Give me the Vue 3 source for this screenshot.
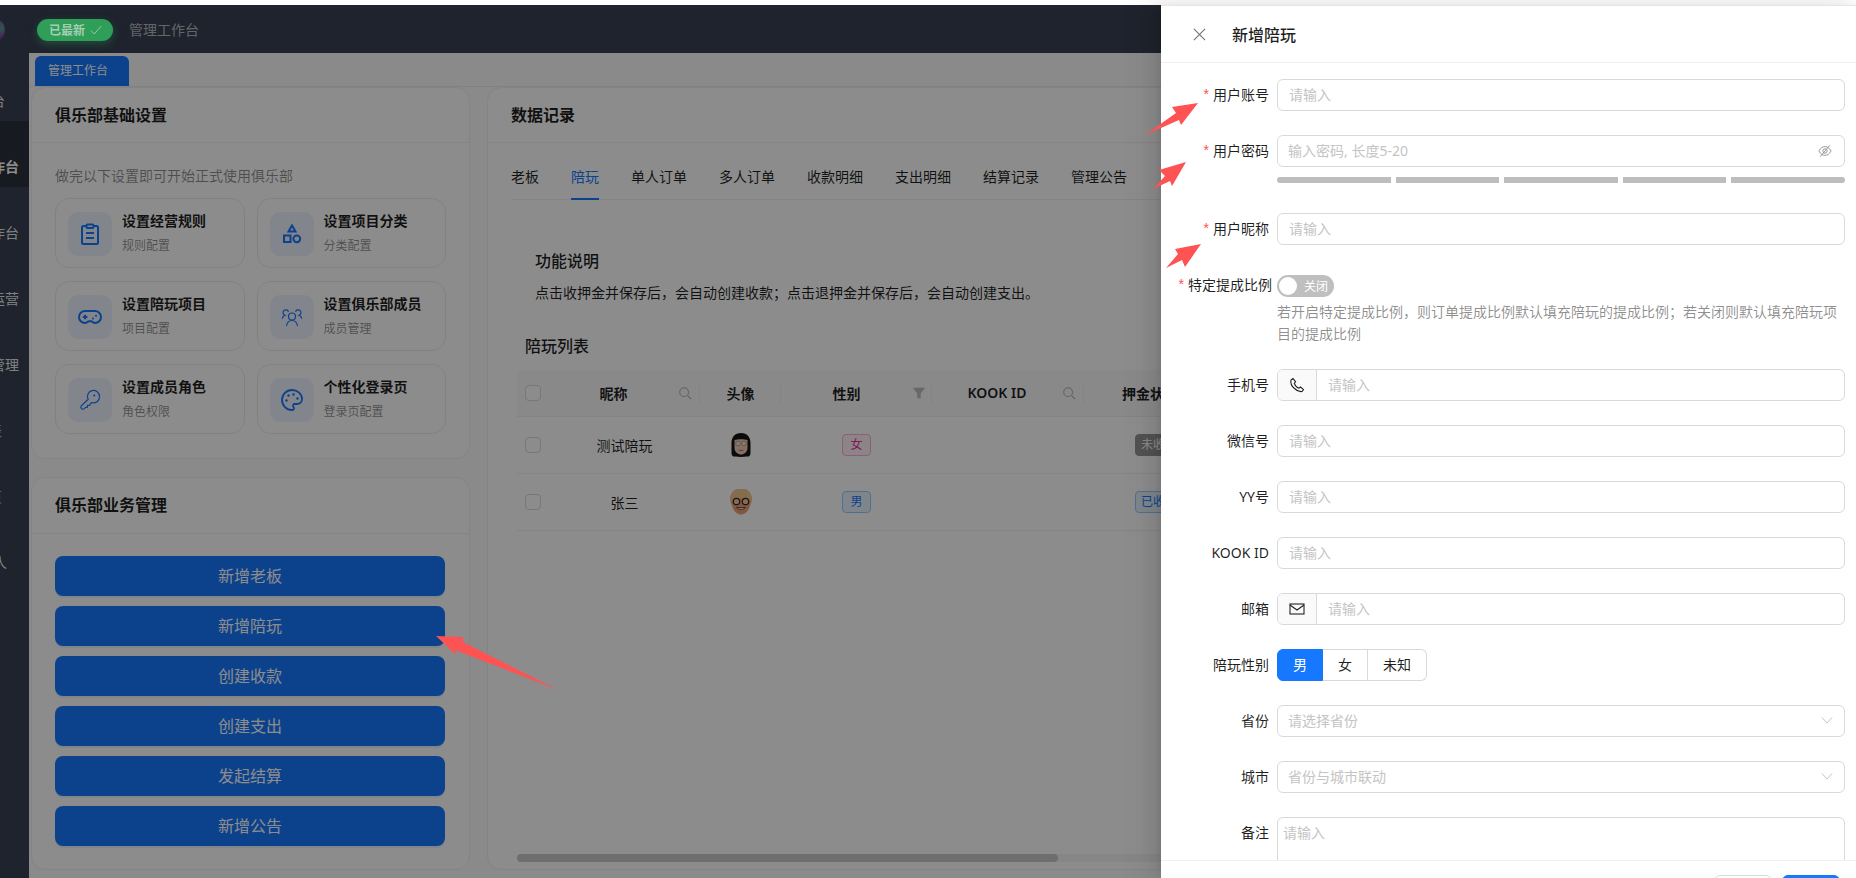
<script setup>
const navItems = [
  { name: '工作台' },
  { name: '管理工作台', active: true },
  { name: '陪玩工作台' },
  { name: '俱乐部运营' },
  { name: '俱乐部管理' },
  { name: '结算表', faint: true },
  { name: '设置页', faint: true },
  { name: '合伙人', tail: true }
]

const setupCards = [
  { title: '设置经营规则', sub: '规则配置', icon: 'rule' },
  { title: '设置项目分类', sub: '分类配置', icon: 'shapes' },
  { title: '设置陪玩项目', sub: '项目配置', icon: 'game' },
  { title: '设置俱乐部成员', sub: '成员管理', icon: 'team' },
  { title: '设置成员角色', sub: '角色权限', icon: 'key' },
  { title: '个性化登录页', sub: '登录页配置', icon: 'palette' }
]

const actions = ['新增老板', '新增陪玩', '创建收款', '创建支出', '发起结算', '新增公告']
const tabs = ['老板', '陪玩', '单人订单', '多人订单', '收款明细', '支出明细', '结算记录', '管理公告']

const players = [
  { name: '测试陪玩', gender: '女', genderClass: 'pink', deposit: '未收款', depositClass: 'gray', avatar: 'girl' },
  { name: '张三', gender: '男', genderClass: 'blue', deposit: '已收款', depositClass: 'blue', avatar: 'boy' }
]

// 表单项，type 决定右侧控件
const fields = [
  { label: '用户账号', required: true, type: 'text', ph: '请输入' },
  { label: '用户密码', required: true, type: 'password', ph: '输入密码, 长度5-20' },
  { label: '用户昵称', required: true, type: 'text', ph: '请输入' },
  { label: '特定提成比例', required: true, type: 'switch' },
  { label: '手机号', type: 'phone', ph: '请输入' },
  { label: '微信号', type: 'text', ph: '请输入' },
  { label: 'YY号', type: 'text', ph: '请输入' },
  { label: 'KOOK ID', type: 'text', ph: '请输入' },
  { label: '邮箱', type: 'mail', ph: '请输入' },
  { label: '陪玩性别', type: 'radio' },
  { label: '省份', type: 'select', ph: '请选择省份' },
  { label: '城市', type: 'select', ph: '省份与城市联动' },
  { label: '备注', type: 'textarea', ph: '请输入' }
]

const arrows = [
  '1198,103 1172,107 1176,113 1145,135 1179,120 1181,125',
  '1186,162 1159,170 1165,176 1153,189 1170,181 1172,186',
  '1201,244 1175,249 1178,254 1166,268 1182,260 1185,267',
  '436,636 463,637 463,642 558,690 455,650 456,655'
]
</script>

<template>
  <div class="page">
    <aside class="sidebar">
      <div class="logo"></div>
      <div v-for="item in navItems" :key="item.name" class="nav-item" :class="{ active: item.active, faint: item.faint, tail: item.tail }">
        <span>{{ item.name }}</span>
      </div>
    </aside>

    <div class="main">
      <header class="topbar">
        <span class="crumb">管理工作台</span>
      </header>

      <div class="tabbar"><div class="page-tab">管理工作台</div></div>

      <div class="content">
        <div class="left-col">
          <section class="card">
            <h3 class="card-head">俱乐部基础设置</h3>
            <div class="setup-body">
              <p class="setup-hint">做完以下设置即可开始正式使用俱乐部</p>
              <div class="setup-grid">
                <div v-for="c in setupCards" :key="c.title" class="setup-card">
                  <div class="setup-icon">
                    <svg viewBox="0 0 24 24" :class="'ic-' + c.icon">
                      <template v-if="c.icon === 'rule'">
                        <rect x="8.500" y="2.500" width="7" height="3.500" rx="1" />
                        <path d="M16 4h2.500a1.500 1.500 0 0 1 1.500 1.500v15a1.500 1.500 0 0 1-1.500 1.500h-13A1.500 1.500 0 0 1 4 20.500v-15A1.500 1.500 0 0 1 5.500 4H8M8 11h8M8 16h8" />
                      </template>
                      <template v-else-if="c.icon === 'shapes'">
                        <path d="M12 3.500l3.500 6h-7z" />
                        <rect x="4" y="13.500" width="6.500" height="6.500" />
                        <circle cx="16.800" cy="16.800" r="3.400" />
                      </template>
                      <template v-else-if="c.icon === 'game'">
                        <path d="M7 6h10a6 6 0 0 1 0 12c-2 0-2.600-1.800-4-1.800h-2C9.600 16.200 9 18 7 18A6 6 0 0 1 7 6z" />
                        <path d="M4.800 12h4.600M7.100 9.700v4.600" />
                        <circle class="dot" cx="15" cy="13.500" r="1" /><circle class="dot" cx="18" cy="10.800" r="1" />
                      </template>
                      <template v-else-if="c.icon === 'team'">
                        <circle cx="12" cy="11.500" r="3.500" />
                        <path d="M6.500 21c.5-3.500 2.800-5.500 5.500-5.500s5 2 5.500 5.500" />
                        <path d="M8.500 6.800A2.800 2.800 0 1 0 5 10.300c-1.600.6-2.600 1.900-2.800 3.500M15.500 6.800a2.800 2.800 0 1 1 3.500 3.500c1.600.6 2.600 1.900 2.800 3.500" />
                      </template>
                      <template v-else-if="c.icon === 'key'">
                        <path d="M21.500 8.500a6 6 0 1 0-11.300 2.800L3.300 17.800a2 2 0 0 0 0 2.600 2.200 2.200 0 0 0 3 .2l1.200-1.100 1.700-.1.300-2 2.300-.3 1.700-2.600a6 6 0 0 0 8-6z" />
                        <circle class="dot" cx="16.300" cy="7.500" r="1" />
                      </template>
                      <template v-else>
                        <path d="M12 22a1 1 0 0 1 0-20 10 9 0 0 1 10 9 5 5 0 0 1-5 5h-2.250a1.750 1.750 0 0 0-1.400 2.800l.3.4a1.750 1.750 0 0 1-1.400 2.800z" />
                        <circle class="dot" cx="13.500" cy="6.500" r="1.200" />
                        <circle class="dot" cx="17.500" cy="10.500" r="1.200" />
                        <circle class="dot" cx="6.500" cy="12.500" r="1.200" />
                        <circle class="dot" cx="8.500" cy="7.500" r="1.200" />
                      </template>
                    </svg>
                  </div>
                  <div>
                    <div class="setup-title">{{ c.title }}</div>
                    <div class="setup-sub">{{ c.sub }}</div>
                  </div>
                </div>
              </div>
            </div>
          </section>

          <section class="card card-biz">
            <h3 class="card-head">俱乐部业务管理</h3>
            <div class="action-list">
              <button v-for="a in actions" :key="a" class="action-btn">{{ a }}</button>
            </div>
          </section>
        </div>

        <section class="card record-card">
          <h3 class="card-head">数据记录</h3>
          <div class="record-tabs">
            <span v-for="t in tabs" :key="t" class="record-tab" :class="{ on: t === '陪玩' }">{{ t }}</span>
          </div>
          <div class="intro">
            <h4>功能说明</h4>
            <p>点击收押金并保存后，会自动创建收款；点击退押金并保存后，会自动创建支出。</p>
          </div>
          <h4 class="list-title">陪玩列表</h4>
          <div class="table">
            <div class="t-row t-head">
              <div class="t-cell"><i class="check"></i></div>
              <div class="t-cell sep has-icon">
                <span>昵称</span>
                <svg viewBox="0 0 16 16" class="th-icon"><circle cx="7" cy="7" r="5" /><path d="M11 11l4 4" /></svg>
              </div>
              <div class="t-cell sep">头像</div>
              <div class="t-cell sep has-icon has-filter">
                <span>性别</span>
                <svg viewBox="0 0 16 16" class="th-icon filter"><path d="M1 2h14L10 8.500V14H6V8.500z" /></svg>
              </div>
              <div class="t-cell sep has-icon">
                <span>KOOK ID</span>
                <svg viewBox="0 0 16 16" class="th-icon"><circle cx="7" cy="7" r="5" /><path d="M11 11l4 4" /></svg>
              </div>
              <div class="t-cell deposit-head">押金状态</div>
            </div>
            <div v-for="p in players" :key="p.name" class="t-row">
              <div class="t-cell"><i class="check"></i></div>
              <div class="t-cell">{{ p.name }}</div>
              <div class="t-cell">
                <svg v-if="p.avatar === 'girl'" viewBox="0 0 20 24" class="avatar-girl">
                  <path d="M10 0C4 0 .5 4 .5 10v10c0 3 2 4 4 3.500 3 .5 8 .5 11 0 2 .5 4-.5 4-3.500V10C19.500 4 16 0 10 0z" fill="#141414" />
                  <path d="M3.500 7C7 6 13 6 16.500 7v8c0 4-3.500 6.500-6.500 6.500S3.500 19 3.500 15z" fill="#eccdb4" />
                  <circle cx="7" cy="10.500" r="2.300" fill="#f6e4d4" stroke="#8a7a6c" stroke-width=".6" />
                  <circle cx="13" cy="10.500" r="2.300" fill="#f6e4d4" stroke="#8a7a6c" stroke-width=".6" />
                  <path d="M7.500 17c1.500.8 3.500.8 5 0" stroke="#a5675a" stroke-width="1" fill="none" />
                </svg>
                <svg v-else viewBox="0 0 24 26" class="avatar-boy">
                  <circle cx="12" cy="10" r="11" fill="#f0c68a" />
                  <path d="M2.500 12c0 8 4.500 13.500 9.500 13.500S21.500 20 21.500 12c-2-3-17-3-19 0z" fill="#ec9f72" />
                  <circle cx="7.500" cy="12.500" r="3.200" fill="#f5c4a0" stroke="#33261f" stroke-width="1.200" />
                  <circle cx="16.500" cy="12.500" r="3.200" fill="#f5c4a0" stroke="#33261f" stroke-width="1.200" />
                  <path d="M7.500 18.500c2.500 2.500 6.500 2.500 9 0z" fill="#fff" stroke="#5a2c20" stroke-width=".8" />
                </svg>
              </div>
              <div class="t-cell"><span class="tag" :class="p.genderClass">{{ p.gender }}</span></div>
              <div class="t-cell"></div>
              <div class="t-cell"><span class="tag narrow" :class="p.depositClass">{{ p.deposit }}</span></div>
            </div>
          </div>
          <div class="h-scroll"><div class="h-thumb"></div></div>
        </section>
      </div>
    </div>

    <div class="mask"></div>

    <span class="badge">已最新
      <svg viewBox="0 0 16 16" class="badge-check"><path d="M2 8.500l4 4 8-9" /></svg>
    </span>

    <div class="drawer">
      <div class="drawer-head">
        <svg viewBox="0 0 14 14" class="close-icon"><path d="M1 1l12 12M13 1L1 13" /></svg>
        <span>新增陪玩</span>
      </div>

      <div class="drawer-body">
        <div v-for="f in fields" :key="f.label" class="form-row" :class="{ 'form-row-pwd': f.type === 'password' }">
          <label class="form-label" :class="{ wide: f.type === 'switch' }">
            <em v-if="f.required">*</em>{{ f.label }}
          </label>

          <div class="form-ctrl">
            <input v-if="f.type === 'text'" class="input" :placeholder="f.ph" />

            <template v-else-if="f.type === 'password'">
              <div class="input-wrap">
                <input class="input bare" :placeholder="f.ph" />
                <svg viewBox="0 0 16 16" class="eye-icon">
                  <path d="M1 8c2-3.500 4.300-5 7-5s5 1.500 7 5c-2 3.500-4.300 5-7 5s-5-1.500-7-5z" />
                  <circle cx="8" cy="8" r="2.500" />
                  <path d="M13.500 1.500l-11 13" />
                </svg>
              </div>
              <div class="strength"><i v-for="n in 5" :key="n"></i></div>
            </template>

            <template v-else-if="f.type === 'switch'">
              <div class="switch"><i></i><span>关闭</span></div>
              <p class="switch-hint">若开启特定提成比例，则订单提成比例默认填充陪玩的提成比例；若关闭则默认填充陪玩项目的提成比例</p>
            </template>

            <div v-else-if="f.type === 'phone' || f.type === 'mail'" class="input-wrap">
              <span class="addon">
                <svg v-if="f.type === 'phone'" viewBox="0 0 16 16"><path d="M4 1.500L2 3c-.8 3.500 1 6.500 3.500 8.500 2 2 4.500 3.500 7.500 3l1.500-2-3-2.500-1.500 1.200C8 10.500 6 8.500 5.300 6.300l1.300-1.500z" /></svg>
                <svg v-else viewBox="0 0 16 16"><rect x="1" y="3" width="14" height="10" /><path d="M1 4l7 5 7-5" /></svg>
              </span>
              <input class="input bare" :placeholder="f.ph" />
            </div>

            <div v-else-if="f.type === 'radio'" class="radio-group">
              <span class="radio on">男</span>
              <span class="radio">女</span>
              <span class="radio">未知</span>
            </div>

            <div v-else-if="f.type === 'select'" class="input-wrap select">
              <span class="select-ph">{{ f.ph }}</span>
              <svg viewBox="0 0 12 12" class="chevron"><path d="M1 3.500l5 5.500 5-5.500" /></svg>
            </div>

            <textarea v-else class="textarea" :placeholder="f.ph"></textarea>
          </div>
        </div>
      </div>

      <div class="drawer-foot">
        <button class="foot-btn">取消</button>
        <button class="foot-btn primary">确定</button>
      </div>
    </div>

    <svg class="marks" viewBox="0 0 1856 878">
      <polygon v-for="(a, i) in arrows" :key="i" :points="a" />
    </svg>
  </div>
</template>

<style scoped>
.page { position: relative; display: flex; height: 873px; padding-top: 5px; overflow: hidden; background: #fff; color: rgba(0,0,0,.88); font-family: "Noto Sans", "Noto Sans CJK SC", sans-serif; font-size: 14px; }

.sidebar { width: 29px; flex-shrink: 0; background: #384052; overflow: hidden; }
.logo { width: 24px; height: 24px; margin: 13px 0 13px -19px; border-radius: 50%; background: radial-gradient(circle at 80% 42%, #5f8f9c 0 10%, #7a3f9c 38%, #3a1f4a 100%); }
.nav-item { position: relative; height: 66px; }
.nav-item span { position: absolute; top: 35px; right: -11px; width: 112px; text-align: center; line-height: 22px; color: rgba(255,255,255,.9); white-space: nowrap; }
.nav-item.active { background: #2c313e; }
.nav-item.active span { color: #fff; font-weight: 600; }
.nav-item.faint span { right: -8px; color: #d8a898; }
.nav-item.tail span { right: -13px; }

.main { flex: 1; min-width: 0; display: flex; flex-direction: column; background: #fbfbfb; }
.topbar { height: 48px; flex-shrink: 0; display: flex; align-items: center; padding-left: 100px; background: #384052; }
.badge { position: absolute; left: 37px; top: 19px; z-index: 11; display: inline-flex; align-items: center; gap: 4px; width: 76px; height: 22px; padding-left: 12px; box-sizing: border-box; border-radius: 11px; background: #2f9e58; color: #a7cdb4; font-size: 12px; font-weight: 600; box-shadow: 0 3px 8px rgba(47,158,88,.35); }
.badge-check { width: 14px; height: 14px; fill: none; stroke: #a7cdb4; stroke-width: 1; }
.crumb { color: rgba(255,255,255,.85); opacity: .75; }

.tabbar { height: 34px; flex-shrink: 0; box-sizing: border-box; padding: 3px 0 0 6px; border-bottom: 1px solid #ececec; }
.page-tab { width: 94px; height: 30px; line-height: 30px; box-sizing: border-box; padding-left: 13px; border-radius: 6px 6px 0 0; background: #1677ff; color: #fff; font-size: 12px; }

.content { display: grid; grid-template-columns: 439px 1fr; gap: 17px; height: 783px; padding-left: 2px; }
.left-col { display: flex; flex-direction: column; gap: 18px; }
.card { box-sizing: border-box; border: 1px solid #f0f0f0; border-radius: 14px; background: #fff; }
.card-head { height: 55px; margin: 0; padding-left: 23px; box-sizing: border-box; line-height: 54px; font-size: 16px; font-weight: 600; border-bottom: 1px solid #f0f0f0; }

.setup-body { padding: 22px 23px 24px; }
.setup-hint { margin: 0 0 11px; line-height: 22px; color: rgba(0,0,0,.45); }
.setup-grid { display: grid; grid-template-columns: 1fr 1fr; gap: 13px 12px; }
.setup-card { display: flex; gap: 10px; height: 70px; box-sizing: border-box; padding: 13px 12px; border: 1px solid #ececec; border-radius: 14px; }
.setup-icon { flex-shrink: 0; width: 44px; height: 44px; display: flex; align-items: center; justify-content: center; border-radius: 10px; background: #edf3fd; }
.setup-icon svg { width: 24px; height: 24px; fill: none; stroke: #1677ff; stroke-width: 1.800; }
.setup-icon svg.ic-team, .setup-icon svg.ic-key { stroke-width: 1.200; }
.setup-icon svg.ic-rule, .setup-icon svg.ic-shapes, .setup-icon svg.ic-game { stroke-width: 2; }
.setup-icon svg .dot { fill: #1677ff; stroke: none; }
.setup-title { margin-top: -2px; line-height: 22px; font-weight: 600; }
.setup-sub { margin-top: 4px; line-height: 20px; font-size: 12px; color: rgba(0,0,0,.45); }

.card-biz { flex: 1; }
.card-biz .card-head { height: 56px; }
.action-list { display: flex; flex-direction: column; gap: 10px; padding: 22px 24px 0 23px; }
.action-btn { height: 40px; padding: 0 0 2px; border: 0; border-radius: 8px; background: #1677ff; color: #fff; font: inherit; font-size: 16px; box-shadow: 0 2px 0 rgba(5,145,255,.1); }

.record-card { display: flex; flex-direction: column; min-width: 0; padding-bottom: 7px; }
.record-tabs { display: flex; gap: 32px; margin: 0 23px; padding-top: 23px; border-bottom: 1px solid #f0f0f0; }
.record-tab { padding-bottom: 10px; margin-bottom: -1px; line-height: 22px; white-space: nowrap; color: rgba(0,0,0,.88); border-bottom: 2px solid transparent; }
.record-tab.on { color: #1677ff; border-bottom-color: #1677ff; }
.intro { margin: 50px 0 0 47px; }
.intro h4 { margin: 0; line-height: 22px; font-size: 16px; font-weight: 500; }
.intro p { margin: 10px 0 0; line-height: 22px; }
.list-title { margin: 30px 0 0 37px; line-height: 24px; font-size: 16px; font-weight: 500; }

.table { margin: 12px 0 0 29px; }
.t-row { display: grid; grid-template-columns: 32px 151px 81px 151px 152px 150px 300px; height: 57px; border-bottom: 1px solid #f0f0f0; box-sizing: border-box; }
.t-head { height: 47px; background: #fafafa; font-weight: 600; border-radius: 6px 6px 0 0; }
.t-cell { display: flex; align-items: center; justify-content: center; position: relative; min-width: 0; padding-bottom: 1px; box-sizing: border-box; }
.t-head .sep::after { content: ""; position: absolute; right: 0; top: 12px; height: 22px; width: 1px; background: #f0f0f0; }
.has-icon { padding-right: 8px; }
.has-filter { padding-right: 6px; }
.has-icon span { flex: 1; text-align: center; }
.th-icon { width: 14px; height: 14px; fill: none; stroke: #b0b0b0; stroke-width: 1.200; }
.th-icon.filter { fill: #bdbdbd; stroke: none; }
.deposit-head { padding-right: 18px; }
.check { display: block; width: 16px; height: 16px; box-sizing: border-box; border: 1px solid #d9d9d9; border-radius: 4px; background: #fff; }
.avatar-girl { width: 20px; height: 24px; }
.avatar-boy { width: 24px; height: 26px; }
.tag { height: 22px; line-height: 20px; padding: 0 7px; box-sizing: border-box; border: 1px solid; border-radius: 4px; font-size: 12px; white-space: nowrap; }
.tag.narrow { padding: 0 5px; }
.tag.pink { color: #eb2f96; background: #fff0f6; border-color: #ffadd2; }
.tag.blue { color: #1677ff; background: #e6f4ff; border-color: #91caff; }
.tag.gray { color: #fff; background: #969696; border-color: #969696; }
.h-scroll { margin: auto 0 0 29px; height: 8px; background: #f5f5f5; border-radius: 4px; }
.h-thumb { width: 541px; height: 8px; border-radius: 4px; background: #c8c8c8; }

.mask { position: absolute; inset: 5px 0 0 0; z-index: 10; background: rgba(0,0,0,.45); }

.drawer { position: absolute; top: 5px; right: 0; bottom: 0; width: 695px; z-index: 20; display: flex; flex-direction: column; background: #fff; box-shadow: -6px 0 16px rgba(0,0,0,.08), -3px 0 6px -4px rgba(0,0,0,.12), -9px 0 28px 8px rgba(0,0,0,.05); }
.drawer-head { flex-shrink: 0; display: flex; align-items: center; gap: 26px; height: 58px; box-sizing: border-box; padding-left: 32px; border-top: 1px solid #e6e6e6; border-bottom: 1px solid #f0f0f0; font-size: 16px; font-weight: 500; }
.close-icon { width: 13px; height: 13px; fill: none; stroke: #777; stroke-width: 1.300; }
.drawer-body { flex: 1; min-height: 0; overflow: hidden; padding: 16px 11px 0 0; }
.form-row { display: flex; margin-bottom: 24px; }
.form-row-pwd { margin-bottom: 30px; }
.form-label { flex-shrink: 0; display: flex; justify-content: flex-end; align-items: center; width: 108px; height: 32px; box-sizing: border-box; padding-bottom: 2px; margin-right: 8px; white-space: nowrap; }
.form-label.wide { position: relative; left: 3px; }
.form-label em { margin-right: 4px; color: #ff4d4f; font-style: normal; font-family: "Liberation Sans", sans-serif; }
.form-ctrl { flex: 1; min-width: 0; }
.input { display: block; width: 100%; height: 32px; box-sizing: border-box; padding: 0 11px 2px; border: 1px solid #d9d9d9; border-radius: 6px; outline: 0; background: #fff; font: inherit; }
.input::placeholder, .textarea::placeholder { color: #c4c4c4; }
.input-wrap { display: flex; align-items: center; height: 32px; box-sizing: border-box; border: 1px solid #d9d9d9; border-radius: 6px; overflow: hidden; }
.input.bare { flex: 1; min-width: 0; height: 30px; border: 0; padding: 0 11px 2px; }
.input-wrap > .input.bare:first-child { padding-left: 10px; }
.eye-icon { width: 14px; height: 14px; margin-right: 12px; flex-shrink: 0; fill: none; stroke: #8c8c8c; stroke-width: 1; }
.strength { display: flex; gap: 5px; margin-top: 10px; }
.strength i { flex: 114; height: 6px; background: #bdbdbd; }
.strength i:nth-child(even) { flex: 103; }
.strength i:first-child { border-radius: 3px 0 0 3px; }
.strength i:last-child { border-radius: 0 3px 3px 0; }
.switch { display: flex; align-items: center; width: 57px; height: 22px; margin-top: 6px; border-radius: 11px; background: #bfbfbf; }
.switch i { width: 18px; height: 18px; margin: 0 7px 0 2px; border-radius: 50%; background: #fff; }
.switch span { color: #fff; font-size: 12px; }
.switch-hint { margin: 4px 0 0; line-height: 22px; color: rgba(0,0,0,.45); }
.addon { flex-shrink: 0; width: 38px; height: 30px; display: flex; align-items: center; justify-content: center; background: #fafafa; border-right: 1px solid #d9d9d9; }
.addon svg { width: 16px; height: 16px; fill: none; stroke: #222; stroke-width: 1.100; }
.radio-group { display: inline-flex; height: 32px; }
.radio { height: 32px; line-height: 30px; padding: 0 15px; box-sizing: border-box; border: 1px solid #d9d9d9; border-left: 0; white-space: nowrap; }
.radio:last-child { border-radius: 0 6px 6px 0; }
.radio.on { border: 1px solid #1677ff; background: #1677ff; color: #fff; border-radius: 6px 0 0 6px; }
.select { justify-content: space-between; padding: 0 11px 2px 10px; }
.select-ph { color: #c4c4c4; }
.chevron { width: 12px; height: 12px; fill: none; stroke: #c4c4c4; stroke-width: 1; }
.textarea { display: block; width: 100%; height: 76px; box-sizing: border-box; padding: 4px 5px; border: 1px solid #d9d9d9; border-radius: 6px; outline: 0; resize: none; font: inherit; }

.drawer-foot { flex-shrink: 0; height: 18px; box-sizing: border-box; display: flex; justify-content: flex-end; gap: 10px; padding: 14px 16px 0 0; border-top: 1px solid #f0f0f0; overflow: hidden; }
.foot-btn { width: 58px; height: 32px; flex-shrink: 0; border: 1px solid #d9d9d9; border-radius: 6px; background: #fff; font: inherit; }
.foot-btn.primary { border-color: #1677ff; background: #1677ff; color: #fff; }

.marks { position: absolute; left: 0; top: 0; width: 1856px; height: 878px; z-index: 30; pointer-events: none; }
.marks polygon { fill: #ff5252; }
</style>

<style>
html, body { margin: 0; overflow: hidden; }
</style>
